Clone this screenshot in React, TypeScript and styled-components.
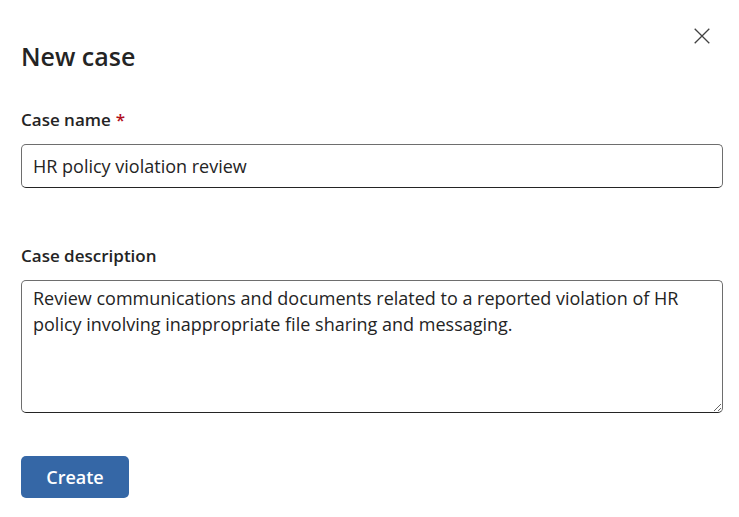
import React from "react";
import styled, { createGlobalStyle } from "styled-components";

const Global = createGlobalStyle`
  html, body { margin: 0; padding: 0; background: #ffffff; }
  body { font-family: "Open Sans", "Noto Sans", sans-serif; color: #242424; }
  * { box-sizing: border-box; }
`;

const Dialog = styled.div`
  width: 739px;
  height: 517px;
  padding: 22px 17px 0 21px;
  display: flex;
  flex-direction: column;
`;

const Header = styled.div`
  display: flex;
  justify-content: space-between;
  align-items: flex-start;
`;

const Title = styled.h1`
  margin: 16px 0 0 0;
  font-size: 25px;
  line-height: 36px;
  font-weight: 600;
  color: #242424;
`;

const CloseButton = styled.button`
  border: none;
  background: transparent;
  padding: 0;
  margin: 4px 10px 0 0;
  width: 20px;
  height: 20px;
  display: flex;
  align-items: center;
  justify-content: center;
  cursor: pointer;
  color: #424242;
`;

const Field = styled.div<{ $top: number }>`
  display: flex;
  flex-direction: column;
  margin-top: ${(p) => p.$top}px;
`;

const Label = styled.label`
  font-size: 17px;
  line-height: 24px;
  font-weight: 600;
  color: #242424;
  margin-bottom: 12px;
`;

const Required = styled.span`
  color: #b10e1c;
  margin-left: 5px;
`;

const TextInput = styled.input`
  width: 702px;
  height: 44px;
  border: 1px solid #6e6e6e;
  border-bottom-color: #242424;
  border-radius: 5px;
  padding: 0 11px;
  font-family: inherit;
  font-size: 18px;
  color: #242424;
  background: #fff;
  outline: none;
`;

const TextArea = styled.textarea`
  width: 702px;
  height: 133px;
  border: 1px solid #6e6e6e;
  border-bottom-color: #242424;
  border-radius: 5px;
  padding: 4px 11px;
  font-family: inherit;
  font-size: 18px;
  line-height: 26px;
  color: #242424;
  background: #fff;
  outline: none;
  resize: both;
`;

const Actions = styled.div`
  margin-top: 43px;
  display: flex;
`;

const PrimaryButton = styled.button`
  width: 108px;
  height: 42px;
  border: none;
  border-radius: 5px;
  background: #3567a6;
  color: #ffffff;
  font-family: inherit;
  font-size: 18px;
  font-weight: 600;
  cursor: pointer;
`;

export default function App() {
  return (
    <>
      <Global />
      <Dialog>
        <Header>
          <Title>New case</Title>
          <CloseButton aria-label="Close">
            <svg width="16" height="16" viewBox="0 0 16 16">
              <path d="M0.7 0.7 L15.3 15.3 M15.3 0.7 L0.7 15.3" stroke="#424242" strokeWidth="1.3" fill="none" />
            </svg>
          </CloseButton>
        </Header>
        <Field $top={34}>
          <Label>
            Case name<Required>*</Required>
          </Label>
          <TextInput defaultValue="HR policy violation review" />
        </Field>
        <Field $top={56}>
          <Label>Case description</Label>
          <TextArea defaultValue="Review communications and documents related to a reported violation of HR policy involving inappropriate file sharing and messaging." />
        </Field>
        <Actions>
          <PrimaryButton>Create</PrimaryButton>
        </Actions>
      </Dialog>
    </>
  );
}
